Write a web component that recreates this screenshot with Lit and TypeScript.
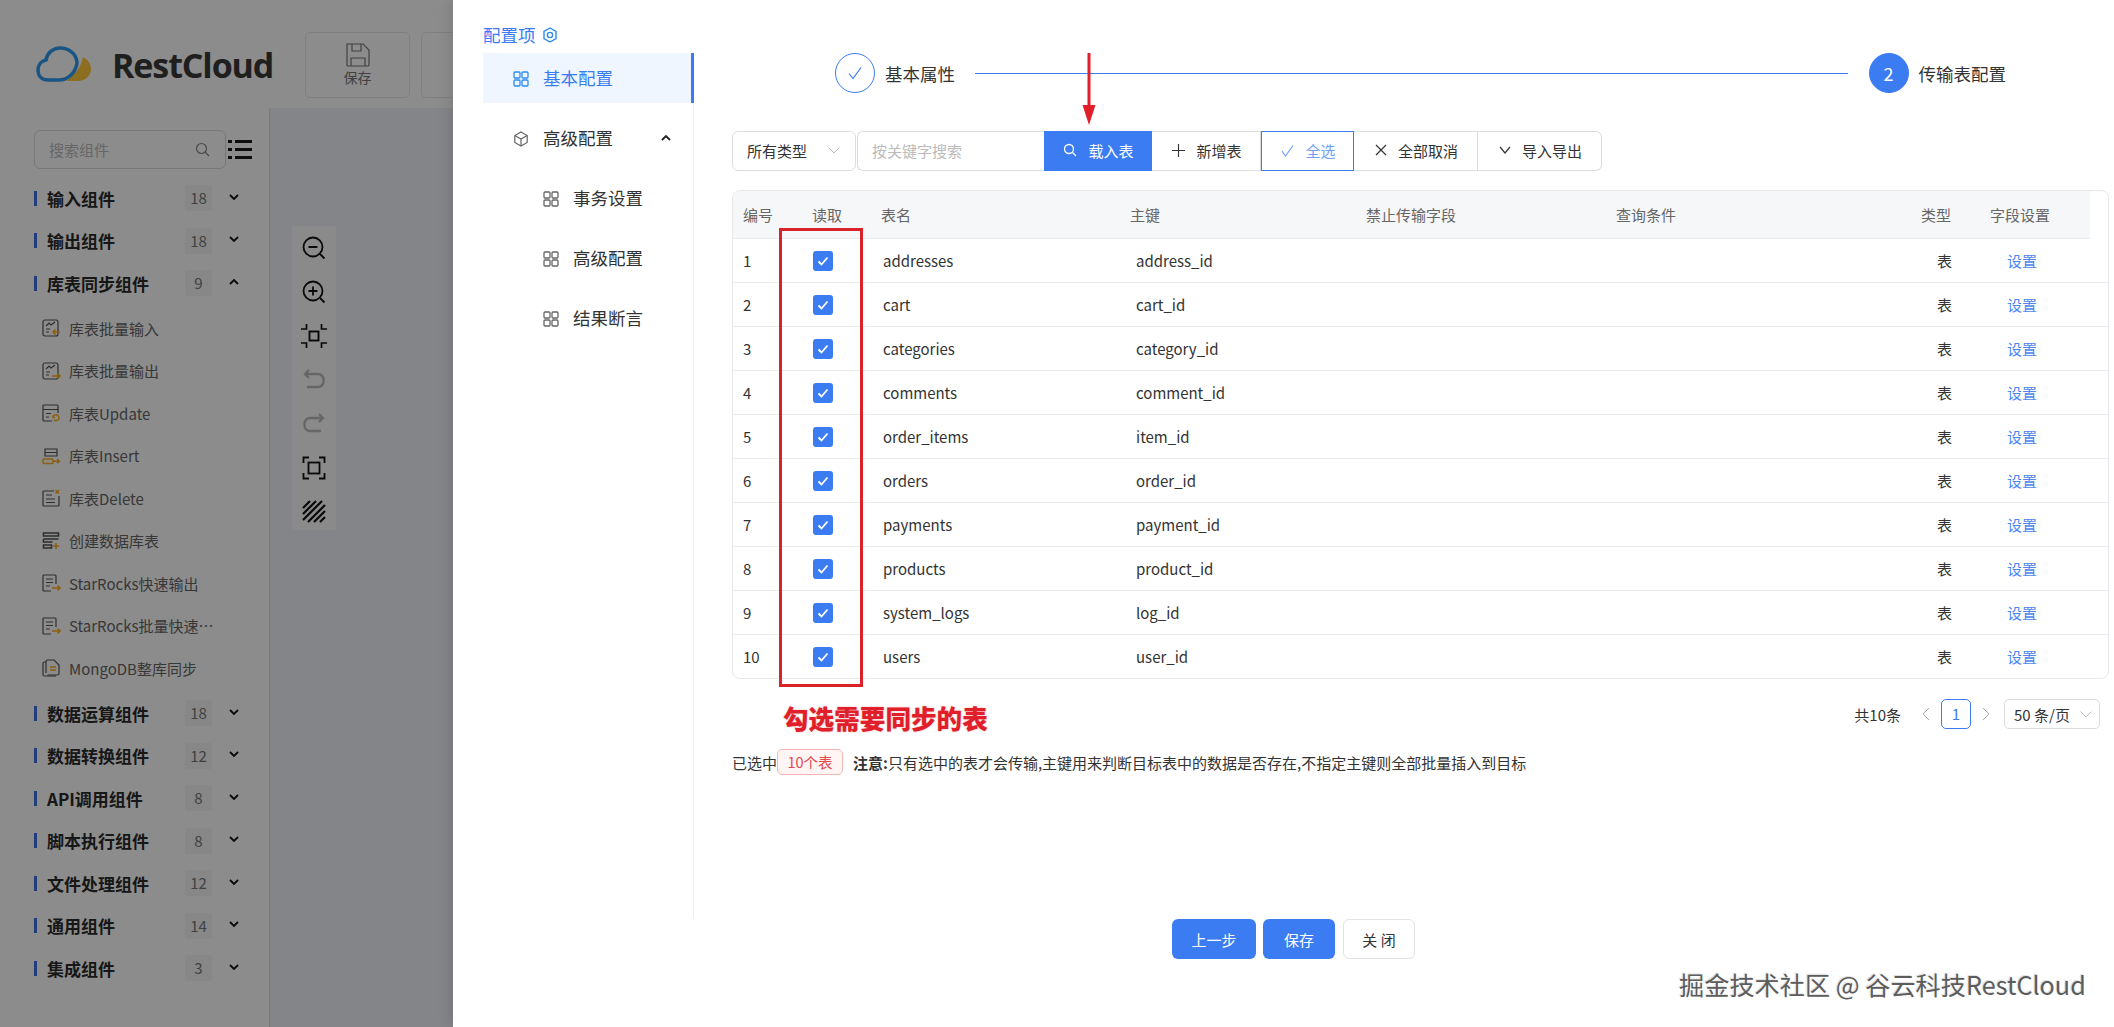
import { LitElement, html, css, svg } from 'lit';
import { customElement } from 'lit/decorators.js';

const chevDown = html`<svg width="12" height="12" viewBox="0 0 12 12" fill="none" stroke="currentColor" stroke-width="1.8"><path d="M2 4l4 4 4-4"/></svg>`;
const chevUp = html`<svg width="12" height="12" viewBox="0 0 12 12" fill="none" stroke="currentColor" stroke-width="1.8"><path d="M2 8l4-4 4 4"/></svg>`;
const thinDown = html`<svg width="14" height="14" viewBox="0 0 14 14" fill="none" stroke="currentColor" stroke-width="1"><path d="M1.5 4.5L7 10l5.5-5.5"/></svg>`;
const gridIcon = html`<svg width="16" height="16" viewBox="0 0 16 16" fill="none" stroke="currentColor" stroke-width="1.3"><rect x="1" y="1" width="6" height="6" rx="1"/><rect x="9" y="1" width="6" height="6" rx="1"/><rect x="1" y="9" width="6" height="6" rx="1"/><rect x="9" y="9" width="6" height="6" rx="1"/></svg>`;
const cubeIcon = html`<svg width="16" height="16" viewBox="0 0 16 16" fill="none" stroke="currentColor" stroke-width="1.2"><path d="M8 1l6.2 3.5v7L8 15l-6.2-3.5v-7z"/><path d="M1.8 4.5L8 8l6.2-3.5M8 8v7"/></svg>`;
const checkIcon = html`<svg width="16" height="16" viewBox="0 0 16 16" fill="none" stroke="currentColor" stroke-width="1.2"><path d="M2 8.5l4 5L14 2.5"/></svg>`;

const ORANGE = '#ffae1a';
const sideIcons: Record<string, unknown> = {
  chartIn: svg`<rect x="1" y="1" width="15" height="16" rx="2"/><path d="M4 7l3-3 2 2 4-3M4 10h4M4 13h3"/><path d="M18 13h-7m2.500-2.500L11 13l2.500 2.500" stroke=${ORANGE} stroke-width="1.600"/>`,
  chartOut: svg`<rect x="1" y="1" width="15" height="16" rx="2"/><path d="M4 7l3-3 2 2 4-3M4 10h4M4 13h3"/><path d="M10 14h8m-2.500-2.500L18 14l-2.500 2.500" stroke=${ORANGE} stroke-width="1.600"/>`,
  update: svg`<path d="M10 17H2a1 1 0 0 1-1-1V2a1 1 0 0 1 1-1h13a1 1 0 0 1 1 1v7M1 5.500h15M4 9.500h5M4 13h3"/><path d="M11 13.500a3 3 0 1 1 1 2.400M11 11.500v2h2" stroke=${ORANGE} stroke-width="1.500"/>`,
  insert: svg`<path d="M3 9V2h12v7M3 5.500h12M2.500 9h13"/><rect x="1" y="12" width="10" height="4.500" rx="1" stroke=${ORANGE} stroke-width="1.500"/><path d="M11 14.200h6.500m-2.500-2l2.500 2-2.500 2" stroke=${ORANGE} stroke-width="1.500"/>`,
  remove: svg`<path d="M12 2H2a1 1 0 0 0-1 1v13a1 1 0 0 0 1 1h14a1 1 0 0 0 1-1V7M4 6h6M4 10h9M4 13.500h9"/><path d="M13.500 1l3.500 3.500M17 1l-3.500 3.500" stroke=${ORANGE} stroke-width="1.600"/>`,
  create: svg`<path d="M1.500 1h15v3h-15zM1.500 7h15M1.500 7v3h9M1.500 13h8v3h-8z" stroke-width="1.600"/><path d="M14 11v6M11 14h6" stroke=${ORANGE} stroke-width="1.600"/>`,
  doc: svg`<path d="M9 17H2a1 1 0 0 1-1-1V2a1 1 0 0 1 1-1h11a1 1 0 0 1 1 1v8M4 5h7M4 8.500h7M4 12h4"/><path d="M10 14h8m-2.500-2.500L18 14l-2.500 2.500" stroke=${ORANGE} stroke-width="1.600"/>`,
  mongo: svg`<path d="M4 3H2.500a1.500 1.500 0 0 0-1.500 1.500v11A1.500 1.500 0 0 0 2.500 17H14"/><path d="M4 14V2.500A1.500 1.500 0 0 1 5.500 1H12l5 5v8.500a1.500 1.500 0 0 1-1.500 1.500h-10"/><path d="M8 8h6M8 11h6" stroke=${ORANGE} stroke-width="1.600"/>`,
};

interface Group { name: string; count: number; open?: boolean }
const groupsTop: Group[] = [
  { name: '输入组件', count: 18 },
  { name: '输出组件', count: 18 },
  { name: '库表同步组件', count: 9, open: true },
];
const groupsBottom: Group[] = [
  { name: '数据运算组件', count: 18 },
  { name: '数据转换组件', count: 12 },
  { name: 'API调用组件', count: 8 },
  { name: '脚本执行组件', count: 8 },
  { name: '文件处理组件', count: 12 },
  { name: '通用组件', count: 14 },
  { name: '集成组件', count: 3 },
];
const items = [
  ['chartIn', '库表批量输入'],
  ['chartOut', '库表批量输出'],
  ['update', '库表Update'],
  ['insert', '库表Insert'],
  ['remove', '库表Delete'],
  ['create', '创建数据库表'],
  ['doc', 'StarRocks快速输出'],
  ['doc', 'StarRocks批量快速输出'],
  ['mongo', 'MongoDB整库同步'],
];
const tables = [
  ['addresses', 'address_id'],
  ['cart', 'cart_id'],
  ['categories', 'category_id'],
  ['comments', 'comment_id'],
  ['order_items', 'item_id'],
  ['orders', 'order_id'],
  ['payments', 'payment_id'],
  ['products', 'product_id'],
  ['system_logs', 'log_id'],
  ['users', 'user_id'],
];

const toolIcons = [
  svg`<circle cx="11" cy="11" r="9.500"/><path d="M6.500 11h9M18 18l4.500 4.500"/>`,
  svg`<circle cx="11" cy="11" r="9.500"/><path d="M6.500 11h9M11 6.500v9M18 18l4.500 4.500"/>`,
  svg`<rect x="7.500" y="7.500" width="9" height="9" stroke-width="1.900"/><path d="M-1 5h5.500V0M19.500 0v5H25M25 19h-5.500v5M4.500 24v-5H-1" stroke-width="1.700"/>`,
  svg`<path d="M7 2L3 6l4 4M3 6h13a5.500 5.500 0 0 1 5.500 5.500v2A5.500 5.500 0 0 1 16 19H5" stroke="#bbb" stroke-width="2.400"/>`,
  svg`<path d="M17 2l4 4-4 4M21 6H8a5.500 5.500 0 0 0-5.500 5.500v2A5.500 5.500 0 0 0 8 19h11" stroke="#bbb" stroke-width="2.400"/>`,
  svg`<rect x="6.500" y="6.500" width="11" height="11"/><path d="M7 1.500H1.500V7M17 1.500h5.500V7M22.500 17v5.500H17M7 22.500H1.500V17"/>`,
  svg`<path d="M1 8l7-7M1 14L14 1M1 20L20 1M6 22L23 5M12 22L23 11M18 22l5-5" stroke-width="2.200"/>`,
];

@customElement('app-root')
export class AppRoot extends LitElement {
  static styles = css`
    :host {
      display: block;
      position: relative;
      width: 100%;
      height: 1027px;
      overflow: hidden;
      background: #fff;
      color: #333;
      font-family: "Noto Sans CJK SC", "Noto Sans", sans-serif;
      font-size: 15px;
    }
    * { box-sizing: border-box; }
    svg { display: block; flex: none; overflow: visible; }

    .page { display: flex; flex-direction: column; height: 100%; }
    .top { height: 108px; display: flex; align-items: center; padding: 22px 0 0 36px; flex: none; }
    .logo-text { font-family: "Open Sans", sans-serif; font-weight: 700; font-size: 34px; letter-spacing: -1.1px; color: #3a3a3a; margin-left: 20px; width: 193px; line-height: 1; }
    .save { width: 105px; height: 66px; border: 1px solid #e8e8e8; border-radius: 5px; margin-right: 11px; display: flex; flex-direction: column; align-items: center; justify-content: center; color: #777; font-size: 14px; line-height: 20px; flex: none; }
    .under { flex: 1; display: flex; min-height: 0; }
    .side { width: 270px; border-right: 1px solid #ddd; padding: 22px 0 0 34px; flex: none; }
    .side-search { display: flex; align-items: center; height: 39px; }
    .search { width: 192px; height: 39px; border: 1px solid #d9d9d9; border-radius: 6px; display: flex; align-items: center; justify-content: space-between; padding: 0 15px 0 14px; color: #bbb; font-size: 15px; }
    .search svg { color: #888; }
    .list-icon { margin-left: 2px; }
    .groups { margin-top: 8px; }
    .group { height: 42.500px; display: grid; grid-template-columns: 13px 138px 27px 44px; align-items: center; }
    .bar { width: 2.500px; height: 15px; background: #3f6fe0; }
    .gname { font-size: 17px; font-weight: 700; color: #2a2a2a; white-space: nowrap; }
    .badge { height: 26px; background: #f6f6f6; border-radius: 2px; color: #777; text-align: center; line-height: 26px; font-size: 15px; }
    .gchev { margin-left: 16px; color: #111; margin-top: -3px; }
    .items { margin: 2.500px 0; }
    .item { height: 42.500px; display: flex; align-items: center; padding-left: 8px; color: #666; }
    .item svg { margin-right: 9px; }
    .item span { width: 148px; white-space: nowrap; overflow: hidden; text-overflow: ellipsis; }
    .canvas { flex: 1; background: #f1f3f9; padding: 118px 0 0 22px; }
    .tools { width: 44px; height: 304px; background: #fbfbfb; padding-top: 10px; display: flex; flex-direction: column; align-items: center; gap: 20px; }

    .mask { position: absolute; inset: 0; background: rgba(0, 0, 0, 0.45); }

    .drawer { position: absolute; top: 0; bottom: 0; left: 453px; right: 0; background: #fff; display: flex; flex-direction: column; box-shadow: -6px 0 10px rgba(0, 0, 0, 0.08); }
    .body { height: 919px; display: flex; flex: none; }
    .menu-col { width: 241px; padding: 17px 0 0 30px; display: flex; flex-direction: column; flex: none; }
    .menu-title { display: flex; align-items: center; gap: 6px; height: 36px; padding-bottom: 1px; color: #3b7cf2; font-size: 17.500px; }
    .menu-title svg { color: #2b8cf0; }
    .menu { flex: 1; border-right: 1px solid #eee; display: flex; flex-direction: column; gap: 10px; }
    .mi { height: 50px; display: flex; align-items: center; padding: 0 21px 1px 30px; font-size: 17.500px; color: #333; white-space: nowrap; }
    .mi svg { margin: 2px 14px 0 0; color: #666; }
    .mi.active { background: #eff6ff; color: #3b7cf2; border-right: 3px solid #3b7cf2; margin-right: -1px; }
    .mi.active svg { color: #2b8cf0; }
    .mi.sub { padding-left: 60px; }
    .mi .up { margin-left: auto; color: #222; }
    .mi .up svg { margin: 0; color: #222; }

    .main { flex: 1; padding: 53px 5px 0 38px; min-width: 0; }
    .steps { display: flex; align-items: center; height: 40px; padding: 0 103px 0 103px; font-size: 17.500px; }
    .circle { width: 40px; height: 40px; border-radius: 50%; border: 1px solid #3b7cf2; color: #3b7cf2; display: flex; align-items: center; justify-content: center; flex: none; margin-right: 10px; }
    .circle.on { background: #3b7cf2; color: #fff; font-size: 18px; }
    .line { flex: 1; height: 1px; background: #3b7cf2; margin: 0 21px 0 20px; }

    .toolbar { display: flex; margin-top: 38px; height: 40px; }
    .select { width: 124px; border: 1px solid #ddd; border-radius: 6px; display: flex; align-items: center; justify-content: space-between; padding: 0 14px 2px; color: #333; margin-right: 1px; }
    .select svg { color: #bbb; }
    .kw { width: 187px; border: 1px solid #ddd; border-radius: 6px 0 0 6px; border-right: 0; display: flex; align-items: center; padding: 0 14px 2px; color: #bbb; }
    .btn { display: flex; align-items: center; justify-content: center; gap: 11px; border: 1px solid #ddd; border-left: 0; color: #333; white-space: nowrap; font-size: 15px; padding: 0 0 2px 2px; }
    .btn.primary { background: #3b7cf2; border-color: #3b7cf2; color: #fff; width: 108px; }
    .btn.plain { width: 109px; }
    .btn.sel { width: 93px; border: 1px solid #3b7cf2; color: #6f9ff5; }
    .btn.w { width: 124px; }
    .btn.last { border-radius: 0 6px 6px 0; }

    .table { margin-top: 19px; border: 1px solid #e6e8eb; border-radius: 8px; overflow: hidden; }
    .tr { display: grid; grid-template-columns: 69px 69px 249px 236px 250px 305px 69px 110px 1fr; height: 44px; align-items: center; border-bottom: 1px solid #e9ebee; }
    .tr:last-child { border-bottom: 0; height: 43px; }
    .thead { height: 48px; border-bottom: 0; color: #666; }
    .thead .th { height: 48px; line-height: 47px; background: #f6f7f9; border-bottom: 1px solid #e9ebee; padding-left: 10px; font-size: 15px; white-space: nowrap; }
    .td { padding-left: 10px; white-space: nowrap; }
    .td.name { padding-left: 12px; }
    .td.key { padding-left: 16px; }
    .td.kind { padding-left: 26px; }
    .td.link { padding-left: 27px; color: #4f86ef; }
    .cb { width: 20px; height: 20px; border-radius: 3px; background: #3b7cf2; color: #fff; display: flex; align-items: center; justify-content: center; margin-left: 11px; }

    .pager { display: flex; justify-content: flex-end; align-items: center; height: 30px; margin-top: 20px; padding-right: 9px; font-size: 15px; }
    .pager .arrow { color: #aaa; width: 12px; margin: 0 9px; }
    .pager .total { margin-right: 10px; }
    .pager .num { width: 30px; height: 30px; border: 1px solid #3b7cf2; border-radius: 5px; color: #3b7cf2; text-align: center; line-height: 28px; }
    .pager .size { width: 96px; height: 30px; border: 1px solid #ddd; border-radius: 5px; margin-left: 3px; display: flex; align-items: center; justify-content: space-between; padding: 0 6px 0 9px; }
    .pager .size svg { color: #bbb; }
    .note { display: flex; align-items: center; height: 26px; margin-top: 20px; color: #333; white-space: nowrap; }
    .tag { width: 66px; height: 26px; border: 1px solid #f3b6b6; background: #fff5f5; border-radius: 5px; color: #e5484d; text-align: center; line-height: 24px; font-size: 14.500px; margin: 0 10px 0 0; }
    .note b { font-weight: 700; }

    .foot { flex: 1; display: flex; gap: 7px; padding-left: 719px; }
    .fbtn { height: 40px; border-radius: 6px; display: flex; align-items: center; justify-content: center; font-size: 15px; }
    .fbtn.blue { background: #3b7cf2; color: #fff; }
    .fbtn.prev { width: 84px; }
    .fbtn.keep { width: 72px; }
    .fbtn.white { border: 1px solid #e2e2e2; color: #333; width: 72px; margin-left: 1px; }

    .note-red { position: absolute; left: 783px; top: 700px; font-size: 25.600px; font-weight: 900; color: #e01f2a; line-height: 36px; white-space: nowrap; text-shadow: 0 0 2px rgba(224, 31, 42, 0.35); }
    .redbox { position: absolute; left: 779px; top: 228px; width: 84px; height: 459px; border: 3px solid #d9222a; }
    .arrow-red { position: absolute; left: 1082px; top: 53px; }
    .mark { position: absolute; left: 1679px; top: 966px; font-size: 25.200px; line-height: 36px; color: #5c5c5c; white-space: nowrap; text-shadow: 1px 1px 1px #fff, -1px -1px 1px #ddd; }
  `;

  private renderGroup(g: Group) {
    return html`<div class="group">
      <div class="bar"></div>
      <div class="gname">${g.name}</div>
      <div class="badge">${g.count}</div>
      <div class="gchev">${g.open ? chevUp : chevDown}</div>
    </div>`;
  }

  private renderPage() {
    return html`<div class="page">
      <div class="top">
        <svg width="56" height="38" viewBox="0 0 56 38">
          <path d="M30 35h12c7 0 13-5 13-12 0-6-4-10-8-12-2 10-8 18-17 24z" fill="#ffc93c"/>
          <path d="M12 34C6 34 2 30 2 24c0-5 3-9 8-10 1-7 7-12 14-12 8 0 16 5 17 14 0 2 0 3-1 5-2 7-9 13-17 13z" fill="none" stroke="#2f9bf0" stroke-width="3.500"/>
        </svg>
        <div class="logo-text">RestCloud</div>
        <div class="save">
          <svg width="24" height="24" viewBox="0 0 24 24" fill="none" stroke="currentColor" stroke-width="1.200"><path d="M1 1h16l6 6v15a1 1 0 0 1-1 1H2a1 1 0 0 1-1-1z"/><path d="M6 1v7h9V1M5 23v-8h14v8"/></svg>
          保存
        </div>
        <div class="save">另存</div>
      </div>
      <div class="under">
        <div class="side">
          <div class="side-search">
            <div class="search">搜索组件
              <svg width="15" height="15" viewBox="0 0 15 15" fill="none" stroke="currentColor" stroke-width="1.200"><circle cx="6.500" cy="6.500" r="5"/><path d="M10 10l4 4"/></svg>
            </div>
            <svg class="list-icon" width="24" height="22" viewBox="0 0 24 22" fill="#1a1a1a"><rect x="0" y="1" width="4" height="3"/><rect x="7" y="1" width="17" height="3"/><rect x="0" y="9" width="4" height="3"/><rect x="7" y="9" width="17" height="3"/><rect x="0" y="17" width="4" height="3"/><rect x="7" y="17" width="17" height="3"/></svg>
          </div>
          <div class="groups">
            ${groupsTop.map((g) => this.renderGroup(g))}
            <div class="items">
              ${items.map(([icon, label]) => html`<div class="item">
                <svg width="18" height="18" viewBox="0 0 18 18" fill="none" stroke="#555" stroke-width="1.200">${sideIcons[icon]}</svg>
                <span>${label}</span>
              </div>`)}
            </div>
            ${groupsBottom.map((g) => this.renderGroup(g))}
          </div>
        </div>
        <div class="canvas">
          <div class="tools">
            ${toolIcons.map((p) => html`<svg width="24" height="24" viewBox="0 0 24 24" fill="none" stroke="#111" stroke-width="1.800">${p}</svg>`)}
          </div>
        </div>
      </div>
    </div>`;
  }

  private renderMenu() {
    return html`<div class="menu-col">
      <div class="menu-title">配置项
        <svg width="16" height="16" viewBox="0 0 16 16" fill="none" stroke="currentColor" stroke-width="1.400"><path d="M8 1l6 3.500v7L8 15l-6-3.500v-7z"/><circle cx="8" cy="8" r="2.600"/></svg>
      </div>
      <div class="menu">
        <div class="mi active">${gridIcon}基本配置</div>
        <div class="mi">${cubeIcon}高级配置<span class="up">${chevUp}</span></div>
        <div class="mi sub">${gridIcon}事务设置</div>
        <div class="mi sub">${gridIcon}高级配置</div>
        <div class="mi sub">${gridIcon}结果断言</div>
      </div>
    </div>`;
  }

  private renderTable() {
    const heads = ['编号', '读取', '表名', '主键', '禁止传输字段', '查询条件', '类型', '字段设置'];
    return html`<div class="table">
      <div class="tr thead">
        ${heads.map((h) => html`<div class="th">${h}</div>`)}
      </div>
      ${tables.map(([name, key], i) => html`<div class="tr">
        <div class="td">${i + 1}</div>
        <div><div class="cb"><svg width="12" height="12" viewBox="0 0 12 12" fill="none" stroke="currentColor" stroke-width="1.800"><path d="M1.500 6.500l3 3 6-7"/></svg></div></div>
        <div class="td name">${name}</div>
        <div class="td key">${key}</div>
        <div class="td"></div>
        <div class="td"></div>
        <div class="td kind">表</div>
        <div class="td link">设置</div>
      </div>`)}
    </div>`;
  }

  private renderMain() {
    return html`<div class="main">
      <div class="steps">
        <div class="circle">${checkIcon}</div>基本属性
        <div class="line"></div>
        <div class="circle on">2</div>传输表配置
      </div>
      <div class="toolbar">
        <div class="select">所有类型 ${thinDown}</div>
        <div class="kw">按关键字搜索</div>
        <div class="btn primary"><svg width="14" height="14" viewBox="0 0 14 14" fill="none" stroke="currentColor" stroke-width="1.300"><circle cx="6" cy="6" r="4.500"/><path d="M9.500 9.500l3.500 3.500"/></svg>载入表</div>
        <div class="btn plain"><svg width="13" height="13" viewBox="0 0 13 13" stroke="currentColor" stroke-width="1.100"><path d="M6.500 0v13M0 6.500h13"/></svg>新增表</div>
        <div class="btn sel"><svg width="13" height="13" viewBox="0 0 13 13" fill="none" stroke="currentColor" stroke-width="1.100"><path d="M1 7l3.500 5L12 1.500"/></svg>全选</div>
        <div class="btn w"><svg width="12" height="12" viewBox="0 0 12 12" stroke="currentColor" stroke-width="1.200"><path d="M1 1l10 10M11 1L1 11"/></svg>全部取消</div>
        <div class="btn w last"><svg width="12" height="12" viewBox="0 0 12 12" fill="none" stroke="currentColor" stroke-width="1.200"><path d="M1 3l5 6 5-6"/></svg>导入导出</div>
      </div>
      ${this.renderTable()}
      <div class="pager">
        <span class="total">共10条</span>
        <svg class="arrow" width="10" height="14" viewBox="0 0 10 14" fill="none" stroke="currentColor"><path d="M8 1L2 7l6 6"/></svg>
        <span class="num">1</span>
        <svg class="arrow" width="10" height="14" viewBox="0 0 10 14" fill="none" stroke="currentColor"><path d="M2 1l6 6-6 6"/></svg>
        <div class="size">50 条/页 ${thinDown}</div>
      </div>
      <div class="note">已选中<span class="tag">10个表</span><b>注意:</b>只有选中的表才会传输,主键用来判断目标表中的数据是否存在,不指定主键则全部批量插入到目标</div>
    </div>`;
  }

  render() {
    return html`
      ${this.renderPage()}
      <div class="mask"></div>
      <div class="drawer">
        <div class="body">
          ${this.renderMenu()}
          ${this.renderMain()}
        </div>
        <div class="foot">
          <div class="fbtn blue prev">上一步</div>
          <div class="fbtn blue keep">保存</div>
          <div class="fbtn white">关 闭</div>
        </div>
      </div>
      <div class="redbox"></div>
      <svg class="arrow-red" width="14" height="72" viewBox="0 0 14 72"><path d="M5.500 0h3v52h5L7 72 .5 52h5z" fill="#e01f2a"/></svg>
      <div class="note-red">勾选需要同步的表</div>
      <div class="mark">掘金技术社区 @ 谷云科技RestCloud</div>
    `;
  }
}
